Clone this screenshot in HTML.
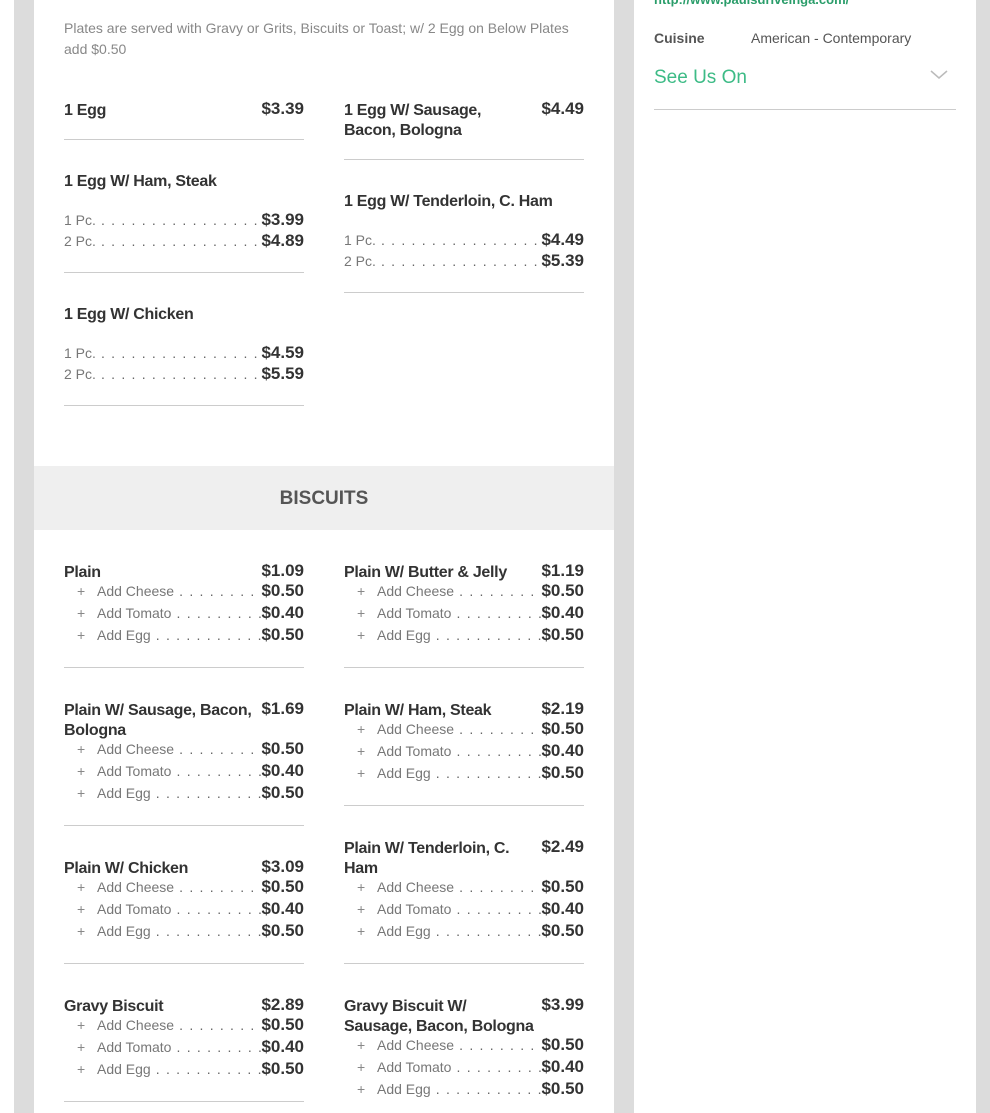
<!DOCTYPE html>
<html><head><meta charset="utf-8"><style>
*{margin:0;padding:0;box-sizing:border-box}
body{width:990px;height:1113px;overflow:hidden;background:#fff;font-family:"Liberation Sans",Arial,sans-serif;position:relative}
.bg{position:absolute;left:14px;top:0;width:976px;height:1113px;background:#dcdcdc}
.card{position:absolute;background:#fff}
.a{position:absolute}
.nm{font-size:16px;font-weight:bold;color:#333;line-height:20px;white-space:nowrap;letter-spacing:-0.3px}
.pr{font-size:17px;font-weight:bold;color:#333;line-height:20px;text-align:right}
.sep{position:absolute;height:1px;background:#ccc;width:240px}
.row{position:absolute;width:240px;display:flex;align-items:center;font-size:14px;color:#777;white-space:nowrap;overflow:hidden}
.row .d{flex:1;overflow:hidden;letter-spacing:1.2px;color:#666}
.row b{font-size:17px;color:#333}
</style></head><body>
<div class="bg"></div>
<div class="card" style="left:34px;top:0;width:580px;height:1113px"></div>
<div class="card" style="left:634px;top:0;width:342px;height:1113px"></div>
<div class="a" style="left:34px;top:466px;width:580px;height:64px;background:#efefef;text-align:center;line-height:66px;font-size:19px;font-weight:bold;color:#555">BISCUITS</div>

<div class="a" style="left:64px;top:18px;width:510px;font-size:14px;line-height:21px;color:#888">Plates are served with Gravy or Grits, Biscuits or Toast; w/ 2 Egg on Below Plates add $0.50</div>

<div class="a" style="left:654px;top:-8px;font-size:13px;font-weight:bold;color:#2a9d6a">http://www.paulsdrivelnga.com/</div>
<div class="a" style="left:654px;top:30px;font-size:14px;font-weight:bold;color:#555;line-height:16px">Cuisine</div>
<div class="a" style="left:751px;top:30px;font-size:14px;color:#555;line-height:16px">American - Contemporary</div>
<div class="a" style="left:654px;top:67px;font-size:19px;color:#3dbb86;line-height:22px">See Us On</div>
<svg class="a" style="left:930px;top:70px" width="18" height="10"><path d="M1 1 L9 8 L17 1" fill="none" stroke="#bbb" stroke-width="1.5"/></svg>
<div class="sep" style="left:654px;top:109px;width:302px"></div>

<div id="c"></div>
<script>
var h='';
var D='&nbsp;. . . . . . . . . . . . . . . . . . . . . . . . . . . . . . . . . . . .';
function it(x,t,name,price){h+='<div class="a nm" style="left:'+x+'px;top:'+(t-8)+'px">'+name+'</div><div class="a pr" style="left:'+x+'px;top:'+(t-10)+'px;width:240px">'+price+'</div>';}
function sep(x,t){h+='<div class="sep" style="left:'+x+'px;top:'+t+'px"></div>';}
function pc(x,t,l,p){h+='<div class="row" style="left:'+x+'px;top:'+(t-11)+'px;height:21px"><span>'+l+'</span><span class="d">'+D+'</span><b>'+p+'</b></div>';}
function ad(x,t,l,p){h+='<div class="row" style="left:'+x+'px;top:'+(t-11)+'px;height:22px"><span style="width:33px;padding-left:13px;color:#888">+</span><span>'+l+'</span><span class="d">'+D+'</span><b>'+p+'</b></div>';}
function adds(x,t){ad(x,t,'Add Cheese','$0.50');ad(x,t+22,'Add Tomato','$0.40');ad(x,t+44,'Add Egg','$0.50');}
var L=64,R=344;
it(L,109,'1 Egg','$3.39');sep(L,139);
it(L,180,'1 Egg W/ Ham, Steak','');pc(L,220,'1 Pc.','$3.99');pc(L,241,'2 Pc.','$4.89');sep(L,272);
it(L,313,'1 Egg W/ Chicken','');pc(L,353,'1 Pc.','$4.59');pc(L,374,'2 Pc.','$5.59');sep(L,405);
it(R,109,'1 Egg W/ Sausage,<br>Bacon, Bologna','$4.49');sep(R,159);
it(R,200,'1 Egg W/ Tenderloin, C. Ham','');pc(R,240,'1 Pc.','$4.49');pc(R,261,'2 Pc.','$5.39');sep(R,292);
it(L,571,'Plain','$1.09');adds(L,591);sep(L,667);
it(L,709,'Plain W/ Sausage, Bacon,<br>Bologna','$1.69');adds(L,749);sep(L,825);
it(L,867,'Plain W/ Chicken','$3.09');adds(L,887);sep(L,963);
it(L,1005,'Gravy Biscuit','$2.89');adds(L,1025);sep(L,1101);
it(R,571,'Plain W/ Butter &amp; Jelly','$1.19');adds(R,591);sep(R,667);
it(R,709,'Plain W/ Ham, Steak','$2.19');adds(R,729);sep(R,805);
it(R,847,'Plain W/ Tenderloin, C.<br>Ham','$2.49');adds(R,887);sep(R,963);
it(R,1005,'Gravy Biscuit W/<br>Sausage, Bacon, Bologna','$3.99');adds(R,1045);
document.getElementById('c').innerHTML=h;
</script>
</body></html>
